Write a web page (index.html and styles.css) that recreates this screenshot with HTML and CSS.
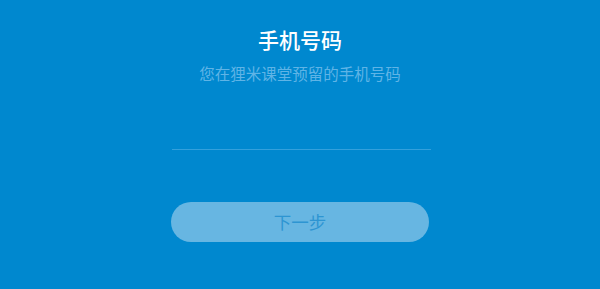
FILE: index.html
```html
<!DOCTYPE html>
<html lang="zh-CN">
<head>
<meta charset="utf-8">
<title>手机号码</title>
<link rel="stylesheet" href="styles.css">
</head>
<body>
<main class="page">
  <h1 class="title">手机号码</h1>
  <p class="subtitle">您在狸米课堂预留的手机号码</p>
  <div class="field">
    <input class="phone" type="tel" aria-label="手机号码">
  </div>
  <button class="next" type="button">下一步</button>
</main>
</body>
</html>
```
FILE: styles.css
```css
html, body {
  margin: 0;
  padding: 0;
  background: #0088cf;
}
body {
  width: 600px;
  height: 289px;
  overflow: hidden;
  font-family: "Noto Sans CJK SC", "Noto Sans", sans-serif;
}
.page {
  display: flex;
  flex-direction: column;
  align-items: center;
  padding-top: 25px;
}
.title {
  margin: 0;
  font-size: 21px;
  line-height: 29px;
  font-weight: 500;
  color: #ffffff;
}
.subtitle {
  margin: 8px 0 0;
  font-size: 15.5px;
  line-height: 22px;
  font-weight: 400;
  color: #5fb4e6;
}
.field {
  width: 259px;
  margin-top: 43px;
  margin-left: 2px;
  border-bottom: 1px solid #33a0dc;
}
.phone {
  display: block;
  width: 100%;
  height: 22px;
  border: 0;
  padding: 0;
  background: transparent;
  outline: none;
}
.next {
  width: 258px;
  height: 40px;
  margin-top: 52px;
  border: 0;
  border-radius: 20px;
  background: #67b6e2;
  color: #2d95d2;
  font-family: "Noto Sans CJK SC", "Noto Sans", sans-serif;
  font-size: 17.5px;
  padding: 0;
  line-height: 40px;
}
```
